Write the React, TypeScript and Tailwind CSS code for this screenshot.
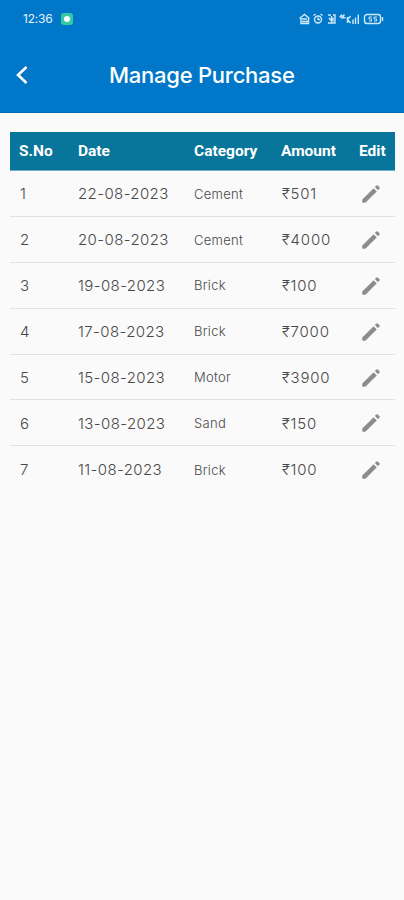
const purchases = [
	{ id: 1, date: '22-08-2023', category: 'Cement', amount: '₹501' },
	{ id: 2, date: '20-08-2023', category: 'Cement', amount: '₹4000' },
	{ id: 3, date: '19-08-2023', category: 'Brick', amount: '₹100' },
	{ id: 4, date: '17-08-2023', category: 'Brick', amount: '₹7000' },
	{ id: 5, date: '15-08-2023', category: 'Motor', amount: '₹3900' },
	{ id: 6, date: '13-08-2023', category: 'Sand', amount: '₹150' },
	{ id: 7, date: '11-08-2023', category: 'Brick', amount: '₹100' },
];

function StatusIcons() {
	return (
		<svg width="86" height="12" viewBox="0 0 86 12" fill="none" stroke="#cfe9fa" strokeWidth="1.4">
			{/* home */}
			<path d="M0.5 5.5 5.5 1.5 10.5 5.5M2 5v5.5h7.500V5M3 6h5M3 8.500h6" />
			{/* alarm */}
			<circle cx="19" cy="6.500" r="3.500" />
			<path d="M19 4.500v2h2M14.500 2.500l2-1.500M23.500 2.500l-2-1.500" />
			{/* nfc */}
			<path d="M29 2h3M29 10h7V2h-2M30 5l2.500 3V3M34 4.500v4" />
			{/* signal */}
			<path d="M42.500 1.500 41 4h3M43 2v4M46 2h-1.500v3H46V4" strokeWidth="1.200" />
			<path d="M48.500 4v6M51.500 3l-3 3.500 3 3.500M54 6.500V11M56.500 4.500V11M59.300 1.500V11" />
			{/* battery */}
			<rect x="65.500" y="1.500" width="16" height="9" rx="2.500" />
			<path d="M83.500 4v4" />
			<path d="M73 4h-3v2h2.500v2H70M78 4h-3v2h2.500v2H75" strokeWidth="1" />
		</svg>
	);
}

function PencilIcon() {
	return (
		<svg className="w-[18px] h-[18px] ml-[3px] -mt-px" viewBox="0 0 18 18" fill="#8c8c8c" stroke="#8c8c8c" strokeWidth="0.8" strokeLinejoin="round">
			<path d="M0.700 17.300v-2.700L11.600 3.700l2.700 2.700L3.400 17.300z" />
			<path d="M13.300 2 14.400.9a1 1 0 0 1 1.300 0l1.400 1.400a1 1 0 0 1 0 1.300l-1.100 1.100z" />
		</svg>
	);
}

export default function App() {
	return (
		<div className="min-h-screen bg-[#fafafa] font-['Inter',sans-serif]">
			<header className="h-[113px] bg-[#0077c8] border-b border-[#0568b4] text-white">
				<div className="h-9 pt-px pl-[23px] pr-[19px] flex items-center">
					<span className="w-[30px] text-[12px] tracking-[-0.2px] whitespace-nowrap text-[#e4f3fd]">12:36</span>
					<span className="ml-2 w-3 h-3 rounded-[3px] bg-[#35c9a4] flex items-center justify-center">
						<span className="w-1.5 h-1.5 rounded-full bg-white" />
					</span>
					<span className="ml-auto">
						<StatusIcons />
					</span>
				</div>
				<div className="h-[77px] flex items-center">
					<svg className="ml-4 w-3 h-5" viewBox="0 0 12 20" fill="none" stroke="white" strokeWidth="2.6">
						<path d="M10.500 2 2 10l8.500 8" />
					</svg>
					<h1 className="ml-[81px] text-[22px] leading-7 font-medium tracking-[-0.25px] whitespace-nowrap">Manage Purchase</h1>
				</div>
			</header>

			<main className="pt-[19px] pl-2.5 pr-[9px]">
				<div className="h-[39px] pt-0.5 pl-[9px] grid grid-cols-[59px_116px_87px_78px_1fr] items-center bg-[#08759b] border-b border-[#6faec4] text-white text-[15.5px] font-bold font-['Roboto',sans-serif]">
					<span>S.No</span>
					<span>Date</span>
					<span>Category</span>
					<span>Amount</span>
					<span>Edit</span>
				</div>
				{purchases.map((p) => (
					<div key={p.id} className="h-[45.9px] pt-0.5 pl-[9px] grid grid-cols-[59px_116px_87px_78px_1fr] items-center border-b border-[#e2e2e2] last:border-0 text-[15px] font-light text-[#484848]">
						<span className="pl-px">{p.id}</span>
						<span className="tracking-[0.4px]">{p.date}</span>
						<span className="text-[13px] tracking-[0.3px]">{p.category}</span>
						<span className="pl-px tracking-[0.8px]">{p.amount}</span>
						<PencilIcon />
					</div>
				))}
			</main>
		</div>
	);
}
